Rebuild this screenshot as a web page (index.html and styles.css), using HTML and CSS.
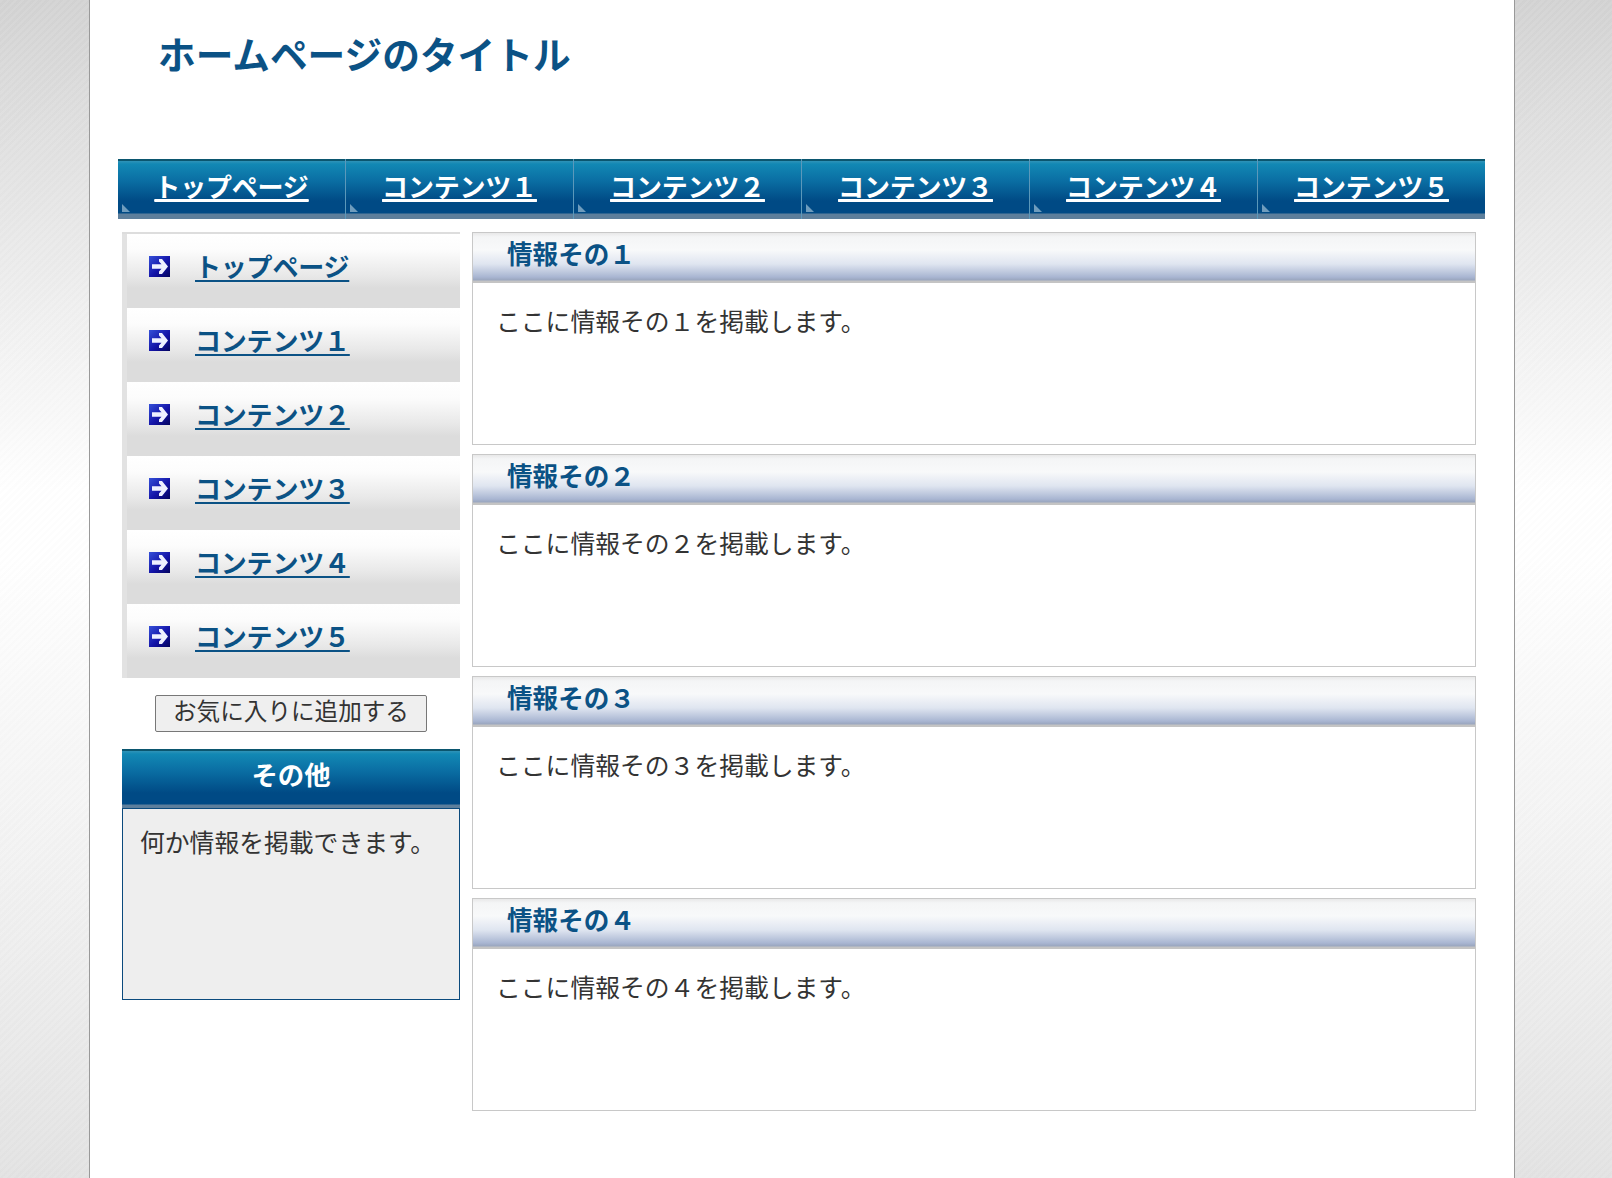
FILE: index.html
```html
<!DOCTYPE html>
<html lang="ja">
<head>
<meta charset="utf-8">
<title>ホームページのタイトル</title>
<link rel="stylesheet" href="styles.css">
</head>
<body>
<svg class="defs" width="0" height="0" aria-hidden="true">
  <defs>
    <linearGradient id="arrowbg" x1="0" y1="0" x2="1" y2="1">
      <stop offset="0" stop-color="#3550d8"/>
      <stop offset="0.55" stop-color="#1414a8"/>
      <stop offset="1" stop-color="#04045e"/>
    </linearGradient>
    <symbol id="arrow" viewBox="0 0 21 21">
      <rect width="21" height="21" fill="url(#arrowbg)"/>
      <path d="M10 3 L13 3 L19 10.5 L13 18 L10 18 L10 15.5 L12.5 12.8 L3 12.8 L3 8.2 L12.5 8.2 L10 5.5 Z" fill="#eef0ff"/>
    </symbol>
  </defs>
</svg>
<div class="page">
  <header class="site-head">
    <h1 class="site-title">ホームページのタイトル</h1>
  </header>
  <nav class="topnav">
    <a class="topnav-item" href="#"><span>トップページ</span></a>
    <a class="topnav-item" href="#"><span>コンテンツ１</span></a>
    <a class="topnav-item" href="#"><span>コンテンツ２</span></a>
    <a class="topnav-item" href="#"><span>コンテンツ３</span></a>
    <a class="topnav-item" href="#"><span>コンテンツ４</span></a>
    <a class="topnav-item" href="#"><span>コンテンツ５</span></a>
  </nav>
  <div class="columns">
    <aside class="side">
      <ul class="sidemenu">
        <li class="sidemenu-item"><svg class="arrow"><use href="#arrow"/></svg><a href="#">トップページ</a></li>
        <li class="sidemenu-item"><svg class="arrow"><use href="#arrow"/></svg><a href="#">コンテンツ１</a></li>
        <li class="sidemenu-item"><svg class="arrow"><use href="#arrow"/></svg><a href="#">コンテンツ２</a></li>
        <li class="sidemenu-item"><svg class="arrow"><use href="#arrow"/></svg><a href="#">コンテンツ３</a></li>
        <li class="sidemenu-item"><svg class="arrow"><use href="#arrow"/></svg><a href="#">コンテンツ４</a></li>
        <li class="sidemenu-item"><svg class="arrow"><use href="#arrow"/></svg><a href="#">コンテンツ５</a></li>
      </ul>
      <div class="fav-row"><button class="fav" type="button">お気に入りに追加する</button></div>
      <h2 class="side-title">その他</h2>
      <div class="side-box">何か情報を掲載できます。</div>
    </aside>
    <main class="main">
      <section class="info"><h2 class="info-title">情報その１</h2><p class="info-text">ここに情報その１を掲載します。</p></section>
      <section class="info"><h2 class="info-title">情報その２</h2><p class="info-text">ここに情報その２を掲載します。</p></section>
      <section class="info"><h2 class="info-title">情報その３</h2><p class="info-text">ここに情報その３を掲載します。</p></section>
      <section class="info"><h2 class="info-title">情報その４</h2><p class="info-text">ここに情報その４を掲載します。</p></section>
    </main>
  </div>
</div>
</body>
</html>
```
FILE: styles.css
```css
* { box-sizing: border-box; }
html, body { margin: 0; padding: 0; height: 100%; }
body {
  font-family: "Noto Sans CJK JP", "Open Sans", sans-serif;
  font-size: 24.8px;
  color: #333;
  overflow: hidden;
  background:
    repeating-linear-gradient(135deg, rgba(255,255,255,0.05) 0 2.5px, rgba(0,0,0,0.006) 2.5px 5px),
    linear-gradient(180deg, #d3d3d3 0, #e6e6e6 200px, #ffffff 490px, #ffffff 560px, #f5f5f5 800px, #e3e3e3 1178px);
}
.defs { position: absolute; }
.page {
  margin-left: 89px;
  width: 1426px;
  height: 1178px;
  background: #fff;
  border-left: 1px solid #999;
  border-right: 1px solid #999;
  padding: 0 28px;
}
.site-head { height: 159px; padding: 26px 0 0 40px; }
.site-title {
  margin: 0;
  font-size: 37.7px;
  line-height: 54px;
  font-weight: 700;
  color: #0b5285;
}
.topnav { display: flex; width: 1367px; height: 60px; }
.topnav-item {
  position: relative;
  flex: 0 0 228px;
  padding-top: 8px;
  text-align: center;
  color: #fff;
  font-size: 26px;
  font-weight: 700;
  line-height: 38px;
  letter-spacing: -0.2px;
  background: linear-gradient(180deg, #0b566f 0, #0b566f 2px, #2f93b8 2px, #1288b4 5px, #0a6ea3 22px, #004a85 42px, #004a85 54px, #5d7f9c 55px, #5d7f9c 100%);
  border-right: 1px solid #5b98ba;
}
.topnav-item:last-child { flex-basis: 227px; border-right: 0; }
.topnav-item span { text-decoration: underline; text-decoration-thickness: 2px; text-underline-offset: 3px; }
.topnav-item::after {
  content: "";
  position: absolute;
  left: 4px;
  bottom: 7px;
  width: 0;
  height: 0;
  border-left: 8px solid #6f9cbd;
  border-top: 8px solid transparent;
}
.columns { display: flex; gap: 12px; margin: 13px 0 0 4px; align-items: flex-start; }
.side { flex: 0 0 338px; }
.sidemenu { list-style: none; margin: 0; padding: 0; border-top: 2px solid #ddd; }
.sidemenu-item {
  display: flex;
  align-items: flex-start;
  gap: 25px;
  height: 74px;
  padding: 14px 0 0 22px;
  border-left: 5px solid #e2e2e2;
  font-size: 26px;
  font-weight: 700;
  line-height: 36px;
  background: linear-gradient(180deg, #fff 0, #fcfcfc 16px, #e8e8e8 42px, #dcdcdc 54px, #dcdcdc 100%);
}
.arrow { flex: 0 0 21px; width: 21px; height: 21px; margin-top: 8px; }
.sidemenu-item a { color: #0b5285; text-decoration-thickness: 2px; text-underline-offset: 3px; letter-spacing: -0.2px; }
.fav-row { display: flex; justify-content: center; margin-top: 17px; }
.fav {
  width: 272px;
  height: 37px;
  padding: 0 0 6px;
  border: 1px solid #777;
  border-radius: 2px;
  background: #efefef;
  color: #333;
  font: inherit;
  font-size: 23.6px;
  line-height: 1;
}
.side-title {
  margin: 17px 0 0;
  height: 59px;
  padding-top: 5px;
  text-align: center;
  color: #fff;
  font-size: 26.4px;
  line-height: 40px;
  font-weight: 700;
  background: linear-gradient(180deg, #0b566f 0, #0b566f 2px, #2f93b8 2px, #1288b4 5px, #0a6ea3 22px, #004a85 44px, #004a85 55px, #5d7f9c 56px, #5d7f9c 100%);
}
.side-box {
  height: 192px;
  padding: 14px 17px;
  border: 1px solid #0b4a7d;
  background: #eee;
  line-height: 36px;
}
.main { flex: 0 0 1004px; }
.info {
  height: 213px;
  margin-bottom: 9px;
  border: 1px solid #c8c8c8;
  background: #fff;
}
.info-title {
  margin: 0;
  height: 50px;
  padding: 1px 0 0 34px;
  color: #0b5285;
  font-size: 25.6px;
  font-weight: 700;
  line-height: 38px;
  background: linear-gradient(180deg, #e8e8e8 0, #f4f5f6 4px, #f8f9fa 17px, #dfe5f0 31px, #a9b6d2 44px, #9aa6bf 47px, #c4c4c4 48px, #c4c4c4 100%);
}
.info-text { margin: 0; padding: 19px 0 0 23px; line-height: 36px; }
```
